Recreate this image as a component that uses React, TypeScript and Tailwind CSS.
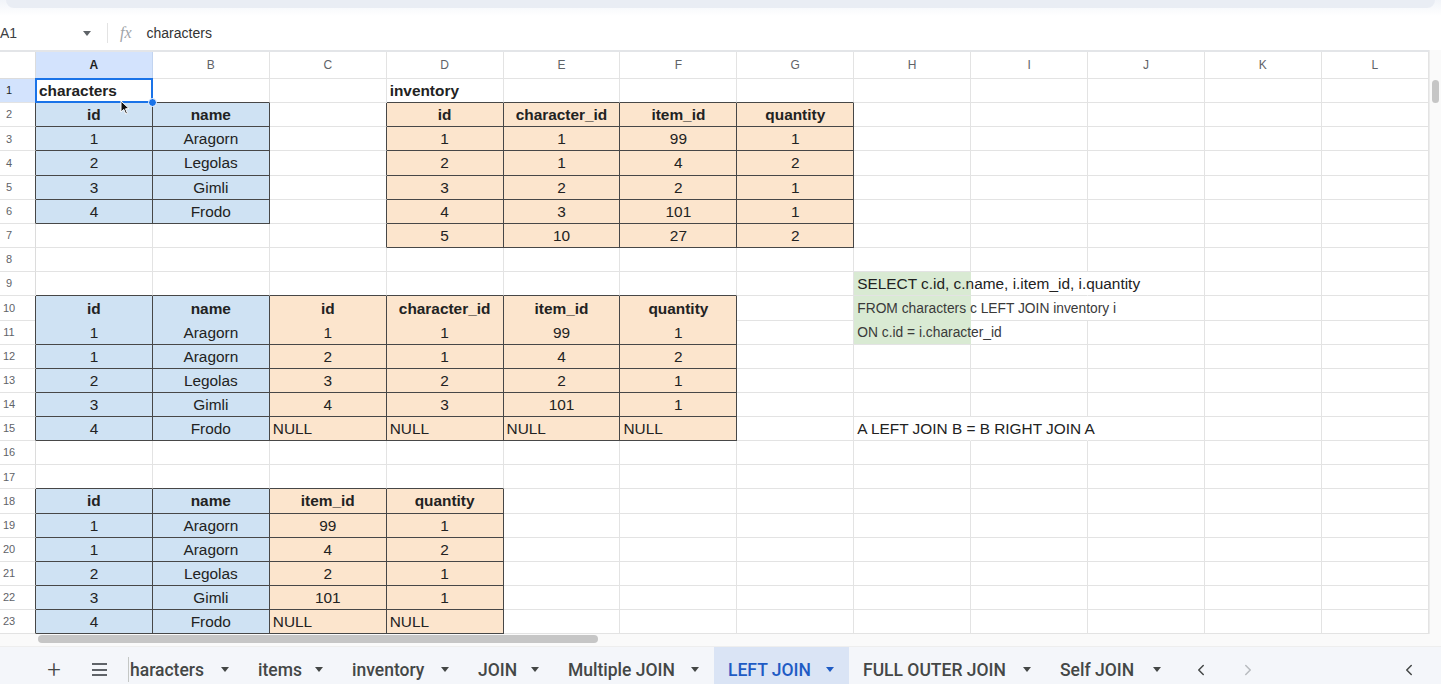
import { ChevronLeft, ChevronRight } from "lucide-react";

type Fill = "b" | "o" | "g";
type Cell = { t?: string; f?: Fill; b?: boolean; al?: "l" | "c"; sm?: boolean };

const LETTERS = ["A", "B", "C", "D", "E", "F", "G", "H", "I", "J", "K", "L"];
const ROWS = Array.from({ length: 23 }, (_, i) => i + 1);

const cells: Record<string, Cell> = {};
const k = (r: number, c: number) => `${r}:${c}`;

function table(r0: number, c0: number, fills: string, rows: string[][]) {
  rows.forEach((row, i) =>
    row.forEach((t, j) => {
      cells[k(r0 + i, c0 + j)] = { t, f: fills[j] as Fill, b: i === 0, al: t === "NULL" ? "l" : "c" };
    })
  );
}

table(2, 0, "bb", [
  ["id", "name"],
  ["1", "Aragorn"],
  ["2", "Legolas"],
  ["3", "Gimli"],
  ["4", "Frodo"],
]);
table(2, 3, "oooo", [
  ["id", "character_id", "item_id", "quantity"],
  ["1", "1", "99", "1"],
  ["2", "1", "4", "2"],
  ["3", "2", "2", "1"],
  ["4", "3", "101", "1"],
  ["5", "10", "27", "2"],
]);
table(10, 0, "bboooo", [
  ["id", "name", "id", "character_id", "item_id", "quantity"],
  ["1", "Aragorn", "1", "1", "99", "1"],
  ["1", "Aragorn", "2", "1", "4", "2"],
  ["2", "Legolas", "3", "2", "2", "1"],
  ["3", "Gimli", "4", "3", "101", "1"],
  ["4", "Frodo", "NULL", "NULL", "NULL", "NULL"],
]);
table(18, 0, "bboo", [
  ["id", "name", "item_id", "quantity"],
  ["1", "Aragorn", "99", "1"],
  ["1", "Aragorn", "4", "2"],
  ["2", "Legolas", "2", "1"],
  ["3", "Gimli", "101", "1"],
  ["4", "Frodo", "NULL", "NULL"],
]);
cells[k(1, 0)] = { t: "characters", b: true, al: "l" };
cells[k(1, 3)] = { t: "inventory", b: true, al: "l" };
cells[k(9, 7)] = { t: "SELECT c.id, c.name, i.item_id, i.quantity", f: "g", al: "l" };
cells[k(10, 7)] = { t: "FROM characters c LEFT JOIN inventory i", f: "g", al: "l", sm: true };
cells[k(11, 7)] = { t: "ON c.id = i.character_id", f: "g", al: "l", sm: true };
cells[k(15, 7)] = { t: "A LEFT JOIN B = B RIGHT JOIN A", al: "l" };

// gridlines hidden under overflowing text
const noRight = new Set(["9:7", "9:8", "10:7", "10:8", "11:7", "15:7", "15:8"]);

const boxed = (r: number, c: number) => {
  const f = cells[k(r, c)]?.f;
  return f === "b" || f === "o";
};

const fillClass: Record<Fill, string> = {
  b: "bg-[#cfe2f3]",
  o: "bg-[#fce5cd]",
  g: "bg-[#d9ead3]",
};

function GridCell({ r, c }: { r: number; c: number }) {
  const cell = cells[k(r, c)];
  const darkR = boxed(r, c) || boxed(r, c + 1);
  const darkB = boxed(r, c) || boxed(r + 1, c);
  const right = noRight.has(k(r, c)) ? "border-r-transparent" : darkR ? "border-r-[#474747]" : "border-r-[#e3e3e3]";
  const bottom = darkB ? "border-b-[#474747]" : "border-b-[#e3e3e3]";
  const selected = r === 1 && c === 0;
  return (
    <div
      className={`relative flex items-center border-r border-b ${right} ${bottom} ${cell?.f ? fillClass[cell.f] : ""} ${
        cell?.al === "c" ? "justify-center" : "justify-start pl-[3px]"
      }`}
    >
      {cell?.t && (
        <span
          className={`relative z-10 whitespace-nowrap ${
            cell.sm ? "mt-[3px] text-[13.8px] text-[#3a3a3a]" : "text-[15.4px] text-[#222]"
          } ${cell.b ? "font-bold" : ""}`}
        >
          {cell.t}
        </span>
      )}
      {selected && (
        <>
          <div className="absolute -inset-px z-20 border-2 border-[#1a73e8]" />
          <div className="absolute -right-[5px] -bottom-[5px] z-30 h-[9px] w-[9px] rounded-full border border-white bg-[#1a73e8]" />
          <svg className="absolute left-[84px] top-[21px] z-30" width="10" height="15" viewBox="0 0 10 15">
            <path d="M1 1 L1 12 L3.8 9.4 L5.8 14 L7.4 13.3 L5.5 8.8 L9 8.6 Z" fill="#111" stroke="#fff" strokeWidth="1" />
          </svg>
        </>
      )}
    </div>
  );
}

const Caret = ({ color = "#444746" }: { color?: string }) => (
  <svg width="8" height="5" viewBox="0 0 8 5">
    <path d="M0 0 L8 0 L4 5 Z" fill={color} />
  </svg>
);

const TABS = [
  { name: "haracters", w: "w-[115px]", first: true },
  { name: "items", w: "w-[94px]" },
  { name: "inventory", w: "w-[126px]" },
  { name: "JOIN", w: "w-[90px]" },
  { name: "Multiple JOIN", w: "w-[160px]" },
  { name: "LEFT JOIN", w: "w-[135px]", active: true },
  { name: "FULL OUTER JOIN", w: "w-[197px]" },
  { name: "Self JOIN", w: "w-[130px]" },
];

export default function App() {
  return (
    <div className="h-[684px] w-[1441px] overflow-hidden bg-white font-['Liberation_Sans',Arial,sans-serif]">
      {/* browser chrome remnant */}
      <div className="h-[16px] bg-gradient-to-b from-[#f1f4f9] to-white px-[6px]">
        <div className="h-[8px] rounded-b-[12px] bg-[#e9edf4]" />
      </div>

      {/* formula bar */}
      <div className="flex h-[34px] items-center text-[14px] text-[#3c4043]">
        <span className="w-[83px]">A1</span>
        <Caret color="#5f6368" />
        <div className="ml-[16px] h-[20px] w-px bg-[#e3e3e3]" />
        <span className="ml-[12px] font-['Liberation_Serif',serif] text-[16px] italic text-[#a0a4a8]">fx</span>
        <span className="ml-[15px] text-[#333]">characters</span>
      </div>

      <div className="flex">
        <div className="w-[1429px]">
          {/* column headers */}
          <div className="grid h-[29px] grid-cols-[36px_repeat(11,116.9px)_1fr] border-t-2 border-[#e3e5e8]">
            <div className="border-r border-b border-[#dcdcdc]" />
            {LETTERS.map((l, i) => (
              <div
                key={l}
                className={`flex items-center justify-center border-r border-b text-[12px] ${
                  i === 0 ? "border-[#c2d4f0] bg-[#d3e3fd] font-bold text-[#1f1f1f]" : "border-[#e3e3e3] text-[#5f6368]"
                }`}
              >
                {l}
              </div>
            ))}
          </div>

          {/* rows */}
          {ROWS.map((r) => (
            <div key={r} className="grid h-[24.15px] grid-cols-[36px_repeat(11,116.9px)_1fr]">
              <div
                className={`flex items-center border-r border-b border-b-[#e3e3e3] ${
                  boxed(r, 0) ? "border-r-[#474747]" : "border-r-[#dcdcdc]"
                } ${r === 1 ? "bg-[#d3e3fd] text-[#1f1f1f]" : "text-[#5f6368]"}`}
              >
                <span className="w-[18px] text-center text-[11px]">{r}</span>
              </div>
              {LETTERS.map((_, c) => (
                <GridCell key={c} r={r} c={c} />
              ))}
            </div>
          ))}
        </div>

        {/* vertical scrollbar */}
        <div className="w-[12px] border-l border-[#ececec] bg-[#fafafa] pt-[30px]">
          <div className="ml-[2px] h-[23px] w-[7px] rounded-full bg-[#c6c6c6]" />
        </div>
      </div>

      {/* horizontal scrollbar */}
      <div className="h-[13px] border-b border-[#eeeeee] bg-[#fafafa] pl-[38px] pt-[1px]">
        <div className="h-[8px] w-[560px] rounded-full bg-[#c6c6c6]" />
      </div>

      {/* sheet tabs */}
      <div className="flex h-[37px] items-center bg-[#f4f6fa] pt-[8px] font-['Roboto',sans-serif] text-[17.5px] font-medium text-[#444746]">
        <span className="ml-[46px] w-[16px] text-center text-[24px] font-light leading-none">+</span>
        <div className="ml-[30px] flex h-[13px] w-[15px] flex-col justify-between">
          <div className="h-[2px] bg-[#5f6368]" />
          <div className="h-[2px] bg-[#5f6368]" />
          <div className="h-[2px] bg-[#5f6368]" />
        </div>
        <div className="ml-[21px] h-[25px] w-px bg-[#c4c7c5]" />
        {TABS.map((t) => (
          <div
            key={t.name}
            className={`-mt-[8px] flex h-[37px] items-center justify-between pt-[8px] ${t.w} ${
              t.first ? "pl-[1px]" : "pl-[14px]"
            } pr-[15px] ${t.active ? "bg-[#dae4f5] text-[#1f5bc4]" : ""}`}
          >
            <span className="whitespace-nowrap">{t.name}</span>
            <Caret color={t.active ? "#1f5bc4" : "#444746"} />
          </div>
        ))}
        <ChevronLeft className="ml-[16px] h-[18px] w-[18px] text-[#444746]" strokeWidth={2} />
        <ChevronRight className="ml-[29px] h-[18px] w-[18px] text-[#b8bbbf]" strokeWidth={2} />
        <ChevronLeft className="ml-auto mr-[23px] h-[18px] w-[18px] text-[#444746]" strokeWidth={2} />
      </div>
    </div>
  );
}
